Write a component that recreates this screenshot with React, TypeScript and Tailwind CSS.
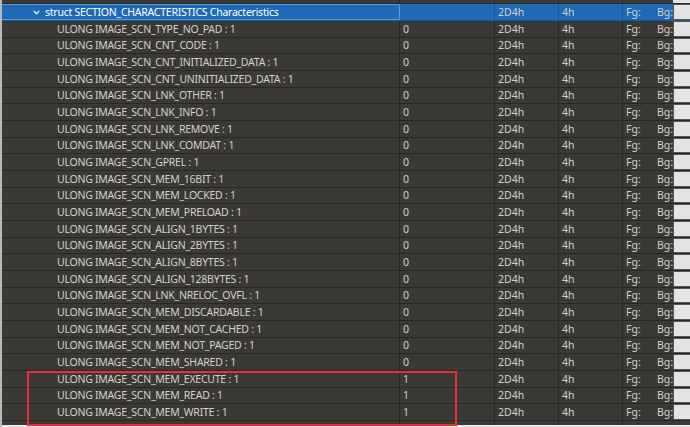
import React from "react";

const names = [
  "TYPE_NO_PAD",
  "CNT_CODE",
  "CNT_INITIALIZED_DATA",
  "CNT_UNINITIALIZED_DATA",
  "LNK_OTHER",
  "LNK_INFO",
  "LNK_REMOVE",
  "LNK_COMDAT",
  "GPREL",
  "MEM_16BIT",
  "MEM_LOCKED",
  "MEM_PRELOAD",
  "ALIGN_1BYTES",
  "ALIGN_2BYTES",
  "ALIGN_8BYTES",
  "ALIGN_128BYTES",
  "LNK_NRELOC_OVFL",
  "MEM_DISCARDABLE",
  "MEM_NOT_CACHED",
  "MEM_NOT_PAGED",
  "MEM_SHARED",
  "MEM_EXECUTE",
  "MEM_READ",
  "MEM_WRITE",
];

const heights = ["h-[17px]", "h-[17px]", "h-[16px]"];

function Row({
  idx,
  name,
  value,
  header,
}: {
  idx: number;
  name: React.ReactNode;
  value: string;
  header?: boolean;
}) {
  const h = heights[idx % 3];
  const bg = header ? "bg-[#1f69b6]" : "bg-[#3b3935]";
  const line = header ? "border-[#1a5596]" : "border-[#2a2826]";
  return (
    <div
      className={`${h} ${bg} grid grid-cols-[398px_95px_64px_64px_67px] border-b ${line} text-[#d2d0cc]`}
    >
      <div
        className={`flex items-center border-r ${
          header ? "border-[#5d9be0] border border-l-0" : "border-[#2a2826]"
        } ${header ? "pl-[31px]" : "pl-[55px]"} whitespace-nowrap overflow-hidden tracking-[-0.25px]`}
      >
        {name}
      </div>
      <div className={`flex items-center pl-[3px] border-r ${header ? "border-[#1a5596]" : "border-[#2a2826]"}`}>
        {value}
      </div>
      <div className={`flex items-center pl-[3px] border-r ${header ? "border-[#1a5596]" : "border-[#2a2826]"}`}>
        2D4h
      </div>
      <div className={`flex items-center pl-[3px] border-r ${header ? "border-[#1a5596]" : "border-[#2a2826]"}`}>
        4h
      </div>
      <div className="flex items-center pl-[3px]">
        <span className="w-[31px]">Fg:</span>
        <span>Bg:</span>
        <span className="ml-auto h-full w-[17px] bg-[#e4e4e4] border-y border-l border-[#555]" />
      </div>
    </div>
  );
}

export default function App() {
  return (
    <div
      className="relative w-[690px] h-[427px] overflow-hidden bg-[#3b3935] text-[10.5px] leading-none"
      style={{ fontFamily: '"Noto Sans", "Open Sans", sans-serif' }}
    >
      <div className="flex h-full">
        <div className="w-[2px] h-full bg-[#b9b9b9]" />
        <div className="flex-1 flex flex-col">
          {/* partial previous row */}
          <div className="h-[4px] bg-[#3b3935] border-b border-[#2a2826] grid grid-cols-[398px_95px_64px_64px_67px]">
            <div className="border-r border-[#2a2826]" />
            <div className="border-r border-[#2a2826]" />
            <div className="border-r border-[#2a2826]" />
            <div className="border-r border-[#2a2826]" />
            <div className="flex justify-end">
              <span className="h-full w-[17px] bg-[#e4e4e4]" />
            </div>
          </div>
          <Row
            idx={0}
            header
            value=""
            name={
              <span className="flex items-center gap-[5px] text-white">
                <svg width="7" height="5" viewBox="0 0 7 5">
                  <path d="M0.8 1 L3.5 3.8 L6.2 1" fill="none" stroke="#e8eef8" strokeWidth="1.3" />
                </svg>
                <span>struct SECTION_CHARACTERISTICS Characteristics</span>
              </span>
            }
          />
          {names.map((n, i) => (
            <Row
              key={n}
              idx={i + 1}
              name={`ULONG IMAGE_SCN_${n} : 1`}
              value={i >= 21 ? "1" : "0"}
            />
          ))}
          <div className="flex-1 grid grid-cols-[398px_95px_64px_64px_67px] bg-[#3b3935]">
            <div className="border-r border-[#2a2826]" />
            <div className="border-r border-[#2a2826]" />
            <div className="border-r border-[#2a2826]" />
            <div className="border-r border-[#2a2826]" />
            <div />
          </div>
          <div className="h-[2px] bg-[#e8e8e8]" />
        </div>
      </div>
      {/* red highlight box */}
      <div className="absolute left-[27px] top-[371px] w-[430px] h-[55px] border-2 border-[#e8312f] pointer-events-none" />
    </div>
  );
}
